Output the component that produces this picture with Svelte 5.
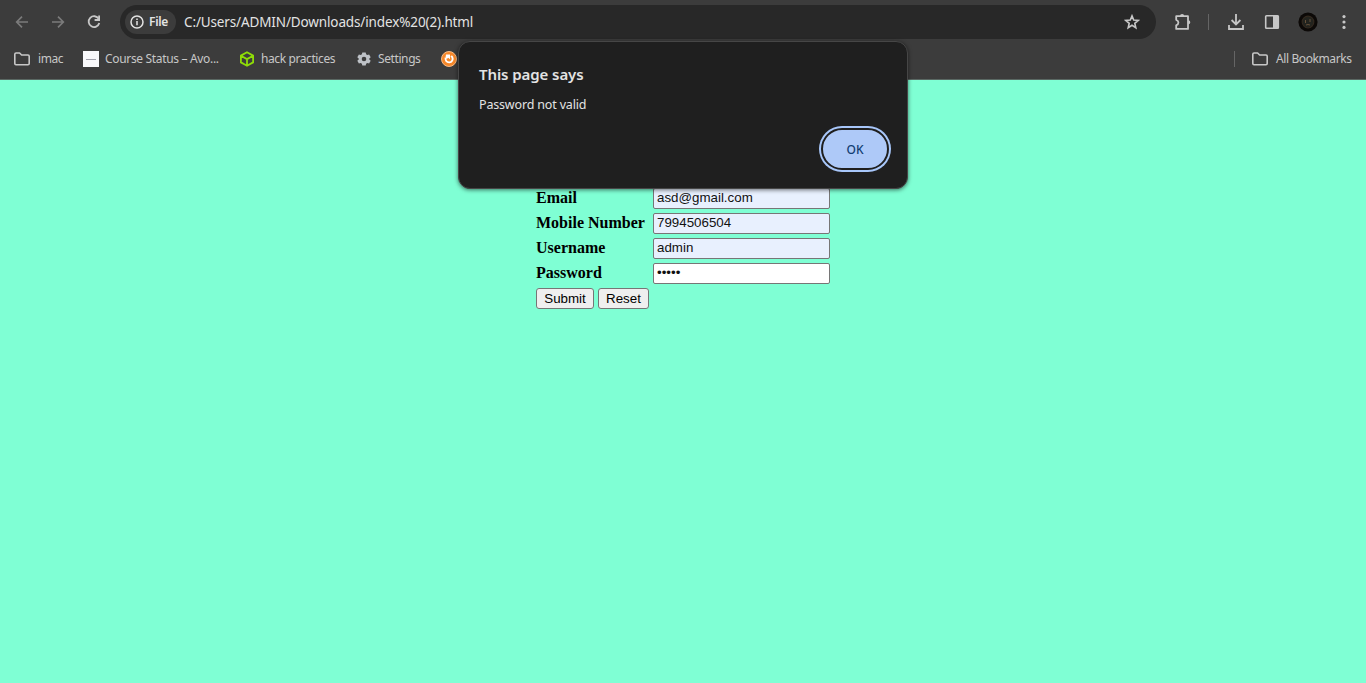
<script>
  const fields = [
    { label: 'Email', value: 'asd@gmail.com', type: 'text', filled: true },
    { label: 'Mobile Number', value: '7994506504', type: 'text', filled: true },
    { label: 'Username', value: 'admin', type: 'text', filled: true },
    { label: 'Password', value: '•••••', type: 'password', filled: false }
  ];
</script>

{#snippet folder()}
  <svg class="folder" width="18" height="16" viewBox="0 0 18 16"><path d="M1.8 3.2Q1.8 2 3 2H6.6L8.6 4H15Q16.2 4 16.2 5.2V12.6Q16.2 13.8 15 13.8H3Q1.8 13.8 1.8 12.6Z" fill="none" stroke="#c7c7c7" stroke-width="1.6" stroke-linejoin="round"/></svg>
{/snippet}

<div class="browser">
  <header>
    <div class="toolbar">
      <svg class="nav" width="16" height="16" viewBox="0 0 16 16"><path d="M14 8H3M8 2.7L2.7 8L8 13.3" fill="none" stroke="#7b7b7b" stroke-width="1.7"/></svg>
      <svg class="nav" width="16" height="16" viewBox="0 0 16 16"><path d="M2 8H13M8 2.7L13.3 8L8 13.3" fill="none" stroke="#7b7b7b" stroke-width="1.7"/></svg>
      <svg class="nav" width="16" height="16" viewBox="0 0 16 16"><path d="M12.7 4.8A5.4 5.4 0 1 0 13.3 9" fill="none" stroke="#c7c7c7" stroke-width="1.8"/><path d="M13.1 1.6V6H8.6" fill="none" stroke="#c7c7c7" stroke-width="1.8"/></svg>
      <div class="omnibox">
        <div class="chip">
          <svg width="14" height="14" viewBox="0 0 14 14"><circle cx="7" cy="7" r="6" fill="none" stroke="#e3e3e3" stroke-width="1.5"/><path d="M7 6V10.3M7 3.5V5" stroke="#e3e3e3" stroke-width="1.5"/></svg>
          <b>File</b>
        </div>
        <span class="url">C:/Users/ADMIN/Downloads/index%20(2).html</span>
        <svg class="star" width="16" height="16" viewBox="0 0 16 16"><path d="M8 1.9L9.7 6L14.2 6.4L10.8 9.3L11.8 13.7L8 11.3L4.2 13.7L5.2 9.3L1.8 6.4L6.3 6Z" fill="none" stroke="#c7c7c7" stroke-width="1.6"/></svg>
      </div>
      <svg class="puzzle" width="18" height="18" viewBox="0 0 18 18"><path d="M2.2 3.2H14V15.9H2.2V12.4Q4.4 11.6 4.4 9.6T2.2 6.8Z" fill="none" stroke="#c7c7c7" stroke-width="1.8" stroke-linejoin="round"/><path d="M6 3A2.1 2.1 0 0 1 10.2 3ZM14.2 7.2A2.1 2.1 0 0 1 14.2 11.4Z" fill="#c7c7c7"/></svg>
      <i class="rule"></i>
      <svg class="download" width="18" height="18" viewBox="0 0 18 18"><path d="M9 1V11M4.6 7L9 11.4L13.4 7M2 12V16H16V12" fill="none" stroke="#c7c7c7" stroke-width="1.8"/></svg>
      <svg class="panel" width="16" height="16" viewBox="0 0 16 16"><rect x="1.7" y="1.8" width="12.6" height="12.4" rx=".8" fill="none" stroke="#c7c7c7" stroke-width="1.6"/><path d="M9 1.5H14.5V14.5H9Z" fill="#c7c7c7"/></svg>
      <svg class="avatar" width="20" height="20" viewBox="0 0 20 20"><circle cx="10" cy="10" r="9.6" fill="#0c0907"/><circle cx="10" cy="10" r="5.8" fill="#22231e" stroke="#32291f" stroke-width="1.2"/><path d="M7.5 8V11M12 7V10M8 13L10 12.5L12 13" stroke="#65503a" stroke-width="1" fill="none"/></svg>
      <svg class="dots" width="4" height="16" viewBox="0 0 4 16"><g fill="#c7c7c7"><circle cx="2" cy="2.6" r="1.6"/><circle cx="2" cy="8" r="1.6"/><circle cx="2" cy="13.4" r="1.6"/></g></svg>
    </div>
    <nav class="bookmarks">
      <div class="mark m1">{@render folder()}<span>imac</span></div>
      <div class="mark m2"><i class="page"></i><span>Course Status – Avo...</span></div>
      <div class="mark m3">
        <svg width="16" height="16" viewBox="0 0 16 16"><path d="M8 1.2L14.1 4.6V11.4L8 14.8L1.9 11.4V4.6ZM2.4 5L8 8.1L13.6 5M8 8.1V14.5" fill="none" stroke="#8edb08" stroke-width="1.8" stroke-linejoin="round"/></svg>
        <span>hack practices</span>
      </div>
      <div class="mark m4">
        <svg width="16" height="16" viewBox="0 0 16 16"><path fill="#bdc1c6" fill-rule="evenodd" d="M6.3 1.5H9.7L10.1 3.3L11.3 4L13.1 3.4L14.7 6.2L13.3 7.4V8.6L14.7 9.8L13.1 12.6L11.3 12L10.1 12.7L9.7 14.5H6.3L5.9 12.7L4.7 12L2.9 12.6L1.3 9.8L2.7 8.6V7.4L1.3 6.2L2.9 3.4L4.7 4L5.9 3.3ZM8 5.7A2.3 2.3 0 1 0 8 10.3A2.3 2.3 0 1 0 8 5.7Z"/></svg>
        <span>Settings</span>
      </div>
      <svg class="swirl" width="16" height="16" viewBox="0 0 16 16"><circle cx="8" cy="8" r="7.5" fill="#f5872a" stroke="#ffc48e" stroke-width=".9"/><path d="M4.7 6.6A3.6 3.6 0 1 0 11.3 6.2L10.2 4.8" fill="none" stroke="#fff" stroke-width="1.9"/><path d="M5 3.6H9V8.2L7.2 6.8L5.8 8L4.6 6.2Z" fill="#fff"/></svg>
      <i class="rule all-rule"></i>
      <div class="mark all">{@render folder()}<span>All Bookmarks</span></div>
    </nav>
  </header>

  <main>
    <form onsubmit={(e) => e.preventDefault()}>
      {#each fields as field}
        <div class="row">
          <b>{field.label}</b>
          <div class="field" class:filled={field.filled}>{field.value}</div>
        </div>
      {/each}
      <div class="actions">
        <button class="submit" type="submit">Submit</button>
        <button class="reset" type="reset">Reset</button>
      </div>
    </form>
  </main>

  <div class="dialog" role="alertdialog">
    <h1>This page says</h1>
    <p>Password not valid</p>
    <button class="ok">OK</button>
  </div>
</div>

<style>
  :global(body) { margin: 0; overflow: hidden; }
  .browser { position: relative; height: 683px; display: flex; flex-direction: column; background: #7fffd4; font-family: "Noto Sans", "Open Sans", sans-serif; }
  svg, i { display: block; flex: none; }
  span { white-space: nowrap; }
  header { height: 80px; box-sizing: border-box; background: #3c3c3c; border-bottom: 1px solid #5a6863; flex: none; }
  .toolbar { height: 43px; display: flex; align-items: center; padding-left: 14px; }
  .nav { margin-right: 20px; }
  .omnibox { width: 1036px; height: 34px; margin-left: -2px; border-radius: 17px; background: #282828; display: flex; align-items: center; box-sizing: border-box; padding: 0 16px 0 5px; }
  .chip { width: 51px; height: 24px; box-sizing: border-box; padding-left: 5px; border-radius: 12px; background: #3c3c3c; display: flex; align-items: center; gap: 5px; color: #e3e3e3; }
  .chip b { font-size: 12px; line-height: 20px; font-weight: 600; letter-spacing: -.3px; }
  .url { margin-left: 8px; font-size: 13.5px; letter-spacing: -.13px; color: #e3e3e3; line-height: 20px; }
  .star { margin-left: auto; }
  .puzzle { margin-left: 18px; }
  .rule { width: 1px; height: 16px; background: #656565; }
  .toolbar .rule { margin-left: 16px; }
  .download { margin-left: 18px; }
  .panel { margin-left: 19px; }
  .avatar { margin-left: 18px; }
  .dots { margin-left: 24px; }
  .bookmarks { height: 32px; display: flex; align-items: center; padding-left: 13px; color: #c7c7c7; font-size: 12px; letter-spacing: -.4px; }
  .mark { display: flex; align-items: center; flex: none; }
  .mark span { line-height: 16px; }
  .m1 { width: 70px; gap: 7px; }
  .m2 { width: 156px; gap: 6px; }
  .m2 span { letter-spacing: -.33px; }
  .m3 { width: 117px; gap: 6px; }
  .m4 { width: 85px; gap: 6px; }
  .page { width: 16px; height: 16px; background: linear-gradient(#a0a0aa, #a0a0aa) center / 10px 1px no-repeat #f8f8fa; }
  .all-rule { margin-left: auto; margin-right: 16px; }
  .all { width: 115px; gap: 7px; }
  main { display: flex; justify-content: center; padding-top: 106px; }
  form { width: 294px; display: flex; flex-direction: column; }
  .row { height: 25px; display: flex; align-items: center; }
  .row b { width: 117px; padding-bottom: 2px; font: bold 16px/20px "Liberation Serif", serif; color: #000; }
  .field { width: 177px; height: 21px; box-sizing: border-box; border: 1px solid #767676; border-radius: 2px; padding: 0 3px; background: #fff; font: 13.333px/18px "Liberation Sans", sans-serif; color: #111; }
  .filled { background: #e8f0fe; }
  .actions { display: flex; gap: 4px; padding-top: 2px; }
  .actions button { height: 21px; padding: 0; box-sizing: border-box; border: 1px solid #767676; border-radius: 3px; background: #efefef; color: #000; font: 13.333px/19px "Liberation Sans", sans-serif; }
  .submit { width: 58px; }
  .reset { width: 51px; }
  .dialog { position: absolute; left: 458px; top: 41px; width: 450px; height: 148px; box-sizing: border-box; padding: 22px 18px 0 20px; border: 1px solid #464646; border-radius: 12px; background: #1f1f1f; box-shadow: 0 1px 4px rgba(0,0,0,.55); color: #e3e3e3; display: flex; flex-direction: column; }
  h1 { margin: 0; font-size: 15px; line-height: 20px; font-weight: 600; letter-spacing: -.08px; }
  p { margin: 11px 0 0; font-size: 12.5px; line-height: 20px; letter-spacing: -.17px; }
  .ok { margin-top: 13px; align-self: flex-end; width: 68px; height: 42px; padding: 0; border: 2px solid #1f1f1f; border-radius: 22px; box-shadow: 0 0 0 2px #a8c7fa; background: #aec9f8; color: #123d72; font: 500 12px "Noto Sans", sans-serif; }
</style>
